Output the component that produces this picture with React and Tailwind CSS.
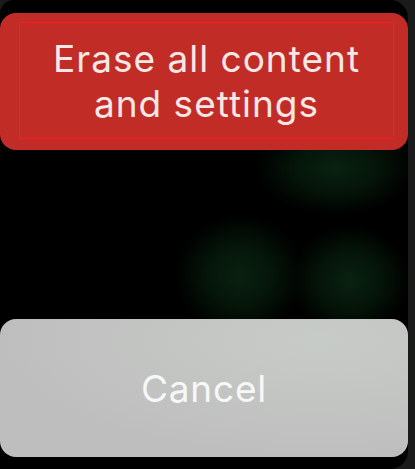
import React from "react";

function Glow({ className }) {
  return (
    <div
      className={
        "pointer-events-none absolute rounded-full bg-[radial-gradient(closest-side,#092111,#051509_50%,transparent)] " +
        className
      }
    />
  );
}

export default function App() {
  return (
    <div className="w-[415px] h-[469px] bg-[#1a1a1a] flex font-['Inter','Roboto',sans-serif]">
      <div className="relative w-[408px] h-full bg-black rounded-tl-[14px] rounded-tr-[18px] rounded-br-[18px] overflow-hidden flex flex-col justify-between pt-[13px] pb-[12px]">
        {/* background glow */}
        <Glow className="left-[255px] top-[120px] w-[160px] h-[95px]" />
        <Glow className="left-[175px] top-[215px] w-[130px] h-[120px]" />
        <Glow className="left-[290px] top-[225px] w-[120px] h-[110px]" />

        <button className="relative z-10 h-[137px] w-full rounded-[16px] bg-[#c22c27] pl-[19px] pr-[14px] pt-[9px] pb-[11px]">
          <div className="h-full w-full border-[1.5px] border-[#ff1a1e] flex items-center justify-center">
            <span className="text-[37px] leading-[45px] tracking-[1px] text-[#f4e8e6]">
              Erase all content
              <br />
              and settings
            </span>
          </div>
        </button>

        <button className="relative z-10 h-[138px] w-full rounded-[16px] bg-[radial-gradient(ellipse_at_78%_15%,#c7cbc7,#c2c4c2_40%,#bebebe_70%)] flex items-center justify-center">
          <span className="text-[37px] leading-[45px] tracking-[0.8px] text-[#f7f7f7]">
            Cancel
          </span>
        </button>
      </div>
    </div>
  );
}
